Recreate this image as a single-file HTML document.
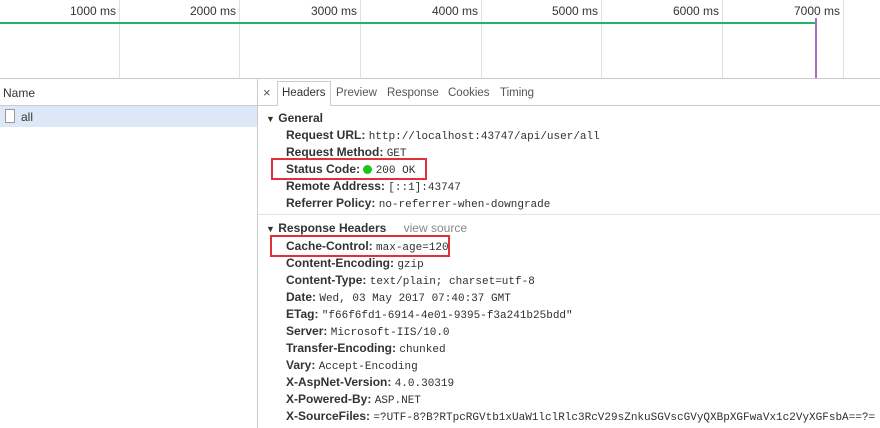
<!DOCTYPE html>
<html><head><style>
*{margin:0;padding:0;box-sizing:border-box}
body{width:880px;height:428px;overflow:hidden;background:#fff;font-family:"Liberation Sans",sans-serif;font-size:12px;color:#333;position:relative}
.a{position:absolute}
.g{position:absolute;top:0;height:78px;width:1px;background:#e0e0e0}
.t{position:absolute;top:4px;font-size:12px;color:#333;text-align:right;width:80px}
.r{position:absolute;left:286px;white-space:nowrap;font-size:12px;color:#222}
.r b{font-weight:bold;color:#333}
.m{font-family:"Liberation Mono",monospace;font-size:11px;color:#303030}
.h{position:absolute;left:266px;font-weight:bold;color:#333;white-space:nowrap}
.tb{font-size:11.5px}
</style></head><body>
<div class="g" style="left:119px"></div><div class="g" style="left:239px"></div><div class="g" style="left:360px"></div><div class="g" style="left:481px"></div><div class="g" style="left:601px"></div><div class="g" style="left:722px"></div><div class="g" style="left:843px"></div>
<div class="t" style="left:36px">1000 ms</div><div class="t" style="left:156px">2000 ms</div><div class="t" style="left:277px">3000 ms</div><div class="t" style="left:398px">4000 ms</div><div class="t" style="left:518px">5000 ms</div><div class="t" style="left:639px">6000 ms</div><div class="t" style="left:760px">7000 ms</div>
<div class="a" style="left:0;top:22px;width:815px;height:2px;background:#1fb36b"></div>
<div class="a" style="left:815px;top:18px;width:2px;height:60px;background:#a66fc0"></div>
<div class="a" style="left:0;top:78px;width:880px;height:1px;background:#ccc"></div>
<div class="a" style="left:0;top:105px;width:880px;height:1px;background:#ccc"></div>
<div class="a" style="left:257px;top:79px;width:1px;height:349px;background:#ccc"></div>
<div class="a" style="left:3px;top:86px">Name</div>
<div class="a" style="left:0;top:106px;width:257px;height:21px;background:#dce8f7"></div>
<div class="a" style="left:5px;top:109px;width:10px;height:14px;border:1px solid #999;background:#fff"></div>
<div class="a" style="left:21px;top:110px">all</div>
<div class="a" style="left:263px;top:85px;font-size:13px;color:#555">×</div>
<div class="a" style="left:277px;top:81px;width:54px;height:25px;border:1px solid #ccc;border-bottom:none;background:#fff"></div>
<div class="a tb" style="left:282px;top:87px">Headers</div>
<div class="a tb" style="left:336px;top:87px;color:#555">Preview</div>
<div class="a tb" style="left:387px;top:87px;color:#555">Response</div>
<div class="a tb" style="left:448px;top:87px;color:#555">Cookies</div>
<div class="a tb" style="left:500px;top:87px;color:#555">Timing</div>
<div class="h" style="top:111px"><span style="font-size:9px">▼</span> General</div>
<div class="r" style="top:128px"><b>Request URL:</b> <span class="m">http://localhost:43747/api/user/all</span></div>
<div class="r" style="top:145px"><b>Request Method:</b> <span class="m">GET</span></div>
<div class="r" style="top:162px"><b>Status Code:</b> <span style="display:inline-block;width:9px;height:9px;border-radius:50%;background:#1cc51c;vertical-align:-1px"></span> <span class="m">200 OK</span></div>
<div class="r" style="top:179px"><b>Remote Address:</b> <span class="m">[::1]:43747</span></div>
<div class="r" style="top:196px"><b>Referrer Policy:</b> <span class="m">no-referrer-when-downgrade</span></div>
<div class="a" style="left:271px;top:158px;width:156px;height:22px;border:2px solid #e0313a"></div>
<div class="a" style="left:258px;top:214px;width:622px;height:1px;background:#e4e4e4"></div>
<div class="h" style="top:221px"><span style="font-size:9px">▼</span> Response Headers <span style="font-weight:normal;color:#888;margin-left:14px">view source</span></div>
<div class="a" style="left:270px;top:235px;width:180px;height:22px;border:2px solid #e0313a"></div>
<div class="r" style="top:239px"><b>Cache-Control:</b> <span class="m">max-age=120</span></div>
<div class="r" style="top:256px"><b>Content-Encoding:</b> <span class="m">gzip</span></div>
<div class="r" style="top:273px"><b>Content-Type:</b> <span class="m">text/plain; charset=utf-8</span></div>
<div class="r" style="top:290px"><b>Date:</b> <span class="m">Wed, 03 May 2017 07:40:37 GMT</span></div>
<div class="r" style="top:307px"><b>ETag:</b> <span class="m">"f66f6fd1-6914-4e01-9395-f3a241b25bdd"</span></div>
<div class="r" style="top:324px"><b>Server:</b> <span class="m">Microsoft-IIS/10.0</span></div>
<div class="r" style="top:341px"><b>Transfer-Encoding:</b> <span class="m">chunked</span></div>
<div class="r" style="top:358px"><b>Vary:</b> <span class="m">Accept-Encoding</span></div>
<div class="r" style="top:375px"><b>X-AspNet-Version:</b> <span class="m">4.0.30319</span></div>
<div class="r" style="top:392px"><b>X-Powered-By:</b> <span class="m">ASP.NET</span></div>
<div class="r" style="top:409px"><b>X-SourceFiles:</b> <span class="m">=?UTF-8?B?RTpcRGVtb1xUaW1lclRlc3RcV29sZnkuSGVscGVyQXBpXGFwaVx1c2VyXGFsbA==?=</span></div>
</body></html>
